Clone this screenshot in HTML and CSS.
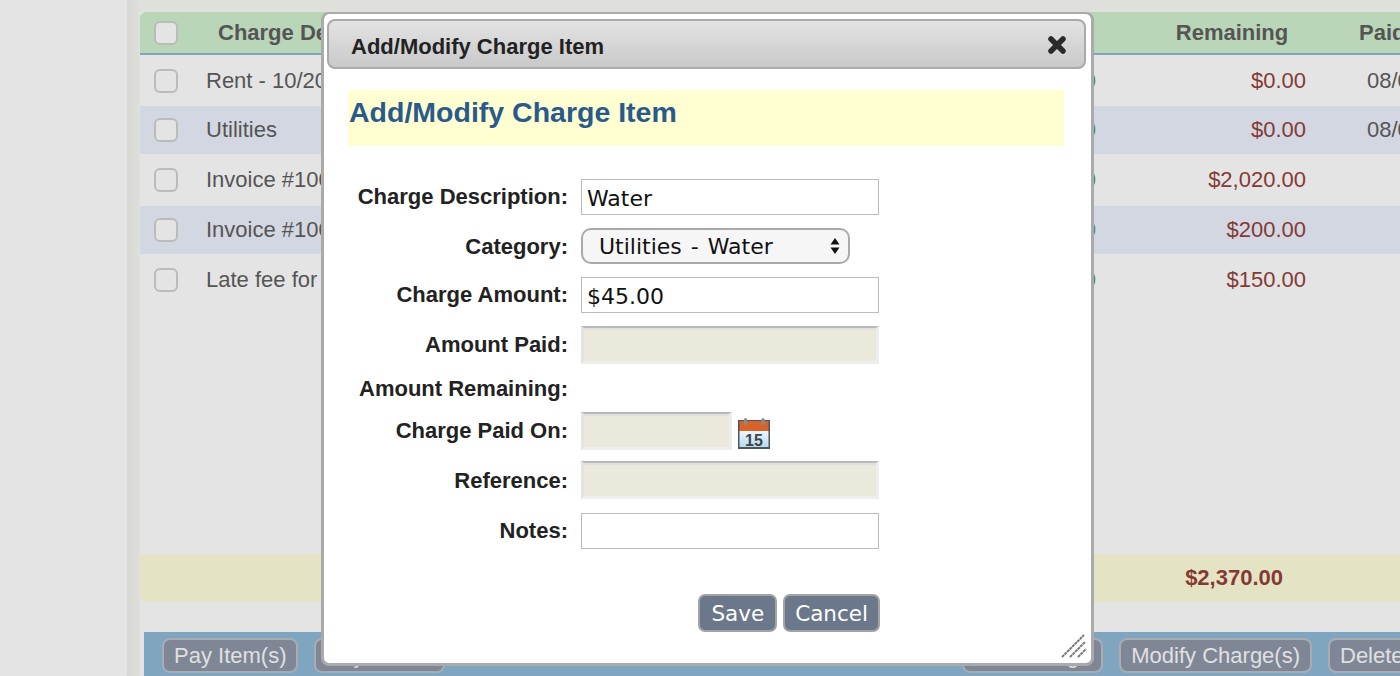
FILE: index.html
```html
<!DOCTYPE html>
<html lang="en">
<head>
    <meta charset="UTF-8">
    <meta name="viewport" content="width=device-width, initial-scale=1.0">
    <title>Charges</title>
    <link rel="stylesheet" href="styles.css">
</head>
<body>
    <div class="page">
        <aside class="sidebar"></aside>
        <div class="sidebar-edge"></div>

        <main class="main">
            <div class="charges-panel">
                <table class="charges-table">
                    <colgroup>
                        <col class="col-check">
                        <col class="col-desc">
                        <col class="col-amount">
                        <col class="col-paid">
                        <col class="col-remaining">
                        <col class="col-date">
                    </colgroup>
                    <thead>
                        <tr>
                            <th class="check-cell"><input type="checkbox" class="row-check"></th>
                            <th class="desc-head">Charge Description</th>
                            <th class="center-head">Amount</th>
                            <th class="center-head">Paid</th>
                            <th class="center-head">Remaining</th>
                            <th class="date-head">Paid On</th>
                        </tr>
                    </thead>
                    <tbody>
                        <tr>
                            <td class="check-cell"><input type="checkbox" class="row-check"></td>
                            <td class="desc-cell">Rent - 10/2018</td>
                            <td class="money-cell">$1,000.00</td>
                            <td class="money-cell paid-cell">$1,000.00</td>
                            <td class="money-cell remaining-cell">$0.00</td>
                            <td class="date-cell">08/01/2018</td>
                        </tr>
                        <tr>
                            <td class="check-cell"><input type="checkbox" class="row-check"></td>
                            <td class="desc-cell">Utilities</td>
                            <td class="money-cell">$120.00</td>
                            <td class="money-cell paid-cell">$120.00</td>
                            <td class="money-cell remaining-cell">$0.00</td>
                            <td class="date-cell">08/01/2018</td>
                        </tr>
                        <tr>
                            <td class="check-cell"><input type="checkbox" class="row-check"></td>
                            <td class="desc-cell">Invoice #1001</td>
                            <td class="money-cell">$2,020.00</td>
                            <td class="money-cell paid-cell">$0.00</td>
                            <td class="money-cell remaining-cell">$2,020.00</td>
                            <td class="date-cell"></td>
                        </tr>
                        <tr>
                            <td class="check-cell"><input type="checkbox" class="row-check"></td>
                            <td class="desc-cell">Invoice #1002</td>
                            <td class="money-cell">$200.00</td>
                            <td class="money-cell paid-cell">$0.00</td>
                            <td class="money-cell remaining-cell">$200.00</td>
                            <td class="date-cell"></td>
                        </tr>
                        <tr>
                            <td class="check-cell"><input type="checkbox" class="row-check"></td>
                            <td class="desc-cell">Late fee for 10/2018</td>
                            <td class="money-cell">$150.00</td>
                            <td class="money-cell paid-cell">$0.00</td>
                            <td class="money-cell remaining-cell">$150.00</td>
                            <td class="date-cell"></td>
                        </tr>
                    </tbody>
                </table>
                <div class="charges-total">$2,370.00</div>
            </div>

            <div class="action-bar">
                <button class="action-button">Pay Item(s)</button>
                <button class="action-button">Pay Partial</button>
                <button class="action-button action-right">Add Charge</button>
                <button class="action-button">Modify Charge(s)</button>
                <button class="action-button">Delete Charge(s)</button>
            </div>
        </main>
    </div>

    <div class="modal">
        <div class="modal-title">
            <span class="modal-title-text">Add/Modify Charge Item</span>
            <svg class="modal-close" width="22" height="22" viewBox="0 0 22 22">
                <path d="M5 5L17 17M17 5L5 17" stroke="#2a2a2a" stroke-width="5.500" stroke-linecap="round" fill="none"/>
            </svg>
        </div>

        <div class="modal-body">
            <h2 class="form-heading">Add/Modify Charge Item</h2>

            <form class="charge-form">
                <div class="form-row">
                    <label class="form-label">Charge Description:</label>
                    <input class="form-input" type="text" value="Water">
                </div>
                <div class="form-row">
                    <label class="form-label label-low">Category:</label>
                    <div class="select-wrap">
                        <select class="form-select">
                            <option>Utilities - Water</option>
                        </select>
                        <svg class="select-arrows" width="10" height="18" viewBox="0 0 10 18">
                            <path d="M5 1L9.500 7.500H.5zM5 17L.5 10.500H9.500z" fill="#111"/>
                        </svg>
                    </div>
                </div>
                <div class="form-row">
                    <label class="form-label">Charge Amount:</label>
                    <input class="form-input" type="text" value="$45.00">
                </div>
                <div class="form-row">
                    <label class="form-label">Amount Paid:</label>
                    <input class="form-input input-disabled" type="text" disabled>
                </div>
                <div class="form-row remaining-row">
                    <label class="form-label label-low">Amount Remaining:</label>
                </div>
                <div class="form-row row-tight">
                    <label class="form-label">Charge Paid On:</label>
                    <input class="form-input input-disabled input-date" type="text" disabled>
                    <svg class="calendar-icon" width="32" height="31" viewBox="0 0 32 31">
                        <defs>
                            <linearGradient id="calendarPage" x1="0" y1="0" x2="0" y2="1">
                                <stop offset="0" stop-color="#eef7fc"/>
                                <stop offset="1" stop-color="#b5daf3"/>
                            </linearGradient>
                        </defs>
                        <rect x="0" y="2" width="32" height="29" fill="#4f5556"/>
                        <rect x="1.500" y="3" width="29" height="10" fill="#d9622a"/>
                        <rect x="1.500" y="13" width="29" height="16" fill="url(#calendarPage)"/>
                        <rect x="6" y="0" width="3" height="7" rx="1.500" fill="#7d8f8f"/>
                        <rect x="23.500" y="0" width="3" height="7" rx="1.500" fill="#7d8f8f"/>
                        <text x="16" y="27.500" text-anchor="middle" class="calendar-day">15</text>
                    </svg>
                </div>
                <div class="form-row row-loose">
                    <label class="form-label label-low">Reference:</label>
                    <input class="form-input input-disabled" type="text" disabled>
                </div>
                <div class="form-row">
                    <label class="form-label">Notes:</label>
                    <input class="form-input" type="text">
                </div>

                <div class="form-buttons">
                    <button class="form-button save-button" type="button">Save</button>
                    <button class="form-button" type="button">Cancel</button>
                </div>
            </form>
        </div>

        <svg class="modal-grip" width="26" height="24" viewBox="0 0 26 24">
            <path d="M1 23L23 1M9 23L24 8M17 23L25 15" stroke="#777" stroke-width="2" stroke-dasharray="3 .6" fill="none"/>
        </svg>
    </div>
</body>
</html>
```

FILE: styles.css
```css
body {
    font-family: "Liberation Sans", Arial, sans-serif;
    margin: 0;
    padding: 0;
    background-color: #e4e4e4;
    color: #555;
    overflow: hidden;
}

.page {
    display: flex;
    width: 1400px;
    height: 676px;
    overflow: hidden;
}

.sidebar {
    flex: 0 0 127px;
    background-color: #e4e4e4;
}

.sidebar-edge {
    flex: 0 0 13px;
    background: linear-gradient(to right, #d6d7d2, #dfdfdb);
}

.main {
    flex: 1;
    min-width: 0;
    display: flex;
    flex-direction: column;
    border-top: 12px solid #dfdfdb;
}

.charges-panel {
    height: 590px;
    display: flex;
    flex-direction: column;
    justify-content: space-between;
}

.charges-table {
    border-collapse: collapse;
    table-layout: fixed;
    width: 1360px;
    font-size: 22px;
}

.col-check { width: 54px; }
.col-desc { width: 400px; }
.col-amount { width: 200px; }
.col-paid { width: 352px; }
.col-remaining { width: 172px; }
.col-date { width: 182px; }

.charges-table thead tr {
    height: 42px;
    background-color: #bad6b8;
    border-bottom: 2px solid #7fa5c0;
}

.charges-table th:first-child {
    border-top-left-radius: 6px;
}

.charges-table tbody tr {
    height: 52px;
}

.charges-table tbody tr:nth-child(even) {
    height: 48px;
    background-color: #d3d7e1;
}

.charges-table th,
.charges-table td {
    padding: 0;
    white-space: nowrap;
    overflow: hidden;
}

.check-cell {
    padding-left: 14px !important;
    text-align: left;
    line-height: 0;
}

.row-check {
    appearance: none;
    display: inline-block;
    box-sizing: border-box;
    width: 24px;
    height: 24px;
    margin: 0;
    background-color: #e4e4e4;
    border: 2px solid #bbb;
    border-radius: 6px;
    vertical-align: middle;
}

.desc-head {
    text-align: left;
    padding-left: 24px !important;
}

.center-head {
    text-align: center;
}

.date-head {
    text-align: left;
    padding-left: 41px !important;
}

.desc-cell {
    padding-left: 12px !important;
}

.money-cell {
    text-align: right;
    padding-right: 12px !important;
}

.paid-cell {
    color: #4f8a2f;
    padding-right: 50px !important;
}

.remaining-cell {
    color: #843a34;
}

.date-cell {
    padding-left: 49px !important;
}

.charges-total {
    height: 48px;
    line-height: 48px;
    padding-right: 117px;
    text-align: right;
    font-size: 22px;
    font-weight: bold;
    color: #843a34;
    background-color: #e4e4c4;
    border-bottom-left-radius: 8px;
}

.action-bar {
    display: flex;
    align-items: flex-start;
    gap: 16px;
    height: 38px;
    margin-top: 30px;
    margin-left: 4px;
    padding: 6px 0 0 18px;
    background-color: #7fa5c0;
    white-space: nowrap;
}

.action-button {
    flex: none;
    box-sizing: border-box;
    height: 35px;
    padding: 1px 10px 0;
    font-family: "Liberation Sans", Arial, sans-serif;
    font-size: 22px;
    color: #e0e0e0;
    background-color: #7f8796;
    border: 2px solid #a9adb3;
    border-radius: 8px;
}

.action-right {
    margin-left: 501px;
}

/* modal sits over the page */
.modal {
    position: absolute;
    left: 321px;
    top: 12px;
    box-sizing: border-box;
    width: 773px;
    height: 654px;
    background-color: white;
    border: 3px solid #aaa;
    border-top-width: 2px;
    border-radius: 8px;
    color: #222;
}

.modal-title {
    display: flex;
    align-items: center;
    justify-content: space-between;
    box-sizing: border-box;
    height: 50px;
    margin: 5px 5px 0 3px;
    padding: 0 16px 0 22px;
    font-size: 22px;
    font-weight: bold;
    background: linear-gradient(to bottom, #e3e3e3, #c9c9c9);
    border: 2px solid #aaa;
    border-radius: 8px;
}

.modal-title-text {
    margin-top: 6px;
}

.modal-close {
    flex: none;
    margin-top: 2px;
}

.modal-body {
    padding: 21px 27px 0 24px;
}

.form-heading {
    height: 56px;
    margin: 0;
    padding: 5px 0 0 1px;
    box-sizing: border-box;
    font-size: 28.500px;
    line-height: 34px;
    color: #2a5a8c;
    background-color: #ffffd2;
}

.charge-form {
    width: 532px;
    margin-top: 33px;
}

.form-row {
    display: flex;
    align-items: center;
    margin-bottom: 13px;
}

.row-tight {
    margin-bottom: 11px;
}

.row-loose {
    margin-bottom: 14px;
}

.remaining-row {
    height: 22px;
}

.form-label {
    flex: 0 0 220px;
    margin-right: 13px;
    text-align: right;
    font-size: 22px;
    font-weight: bold;
    white-space: nowrap;
}

.label-low {
    padding-top: 2px;
}

.form-input {
    box-sizing: border-box;
    width: 298px;
    height: 36px;
    margin: 0;
    padding: 2px 5px 0;
    font-family: "DejaVu Sans", Verdana, sans-serif;
    font-size: 22px;
    color: #111;
    background-color: white;
    border: 1px solid #bbb;
    border-radius: 0;
    outline: none;
}

.input-disabled {
    height: 38px;
    background-color: #ebe8dc;
    border: 3px solid #eee;
    border-top: 2px solid #b9b9b9;
    border-left-color: #e4e4e4;
    box-shadow: inset 0 2px 0 #e0e0e0;
}

.input-date {
    width: 151px;
}

.calendar-icon {
    flex: none;
    margin-top: 4px;
    margin-left: 6px;
}

.calendar-day {
    font-family: "Liberation Sans", Arial, sans-serif;
    font-size: 16px;
    font-weight: bold;
    fill: #3f4446;
}

.select-wrap {
    position: relative;
    width: 269px;
    height: 36px;
}

.form-select {
    appearance: none;
    box-sizing: border-box;
    width: 100%;
    height: 100%;
    padding: 0 0 0 16px;
    font-family: "DejaVu Sans", Verdana, sans-serif;
    font-size: 22px;
    word-spacing: 2px;
    color: #111;
    background-color: #f6f6f6;
    border: 2px solid #aaa;
    border-radius: 10px;
}

.select-arrows {
    position: absolute;
    right: 10px;
    top: 9px;
    pointer-events: none;
}

.form-buttons {
    display: flex;
    justify-content: flex-end;
    gap: 6px;
    margin-top: 45px;
}

.form-button {
    box-sizing: border-box;
    height: 38px;
    padding: 0 10px;
    font-family: "DejaVu Sans", Verdana, sans-serif;
    font-size: 21.500px;
    color: white;
    background-color: #6b788c;
    border: 2px solid #a4a4a4;
    border-radius: 7px;
}

.save-button {
    padding: 0 11px;
}

.modal-grip {
    position: absolute;
    right: 4px;
    bottom: 5px;
}
```
